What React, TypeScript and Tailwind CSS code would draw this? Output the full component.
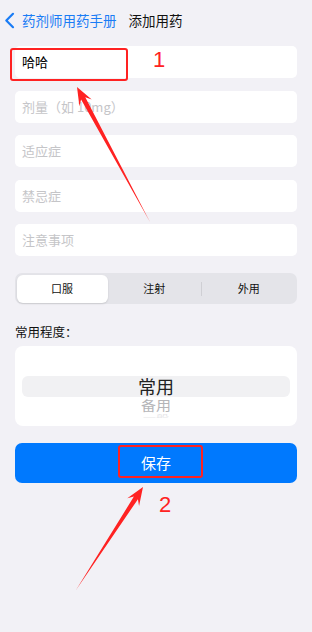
const font = { fontFamily: '"Noto Sans CJK SC", "Noto Sans", sans-serif' };

function arrowPoints(tx: number, ty: number, hx: number, hy: number) {
  const dx = hx - tx;
  const dy = hy - ty;
  const len = Math.hypot(dx, dy);
  const ux = dx / len;
  const uy = dy / len;
  const px = -uy;
  const py = ux;
  const headLen = 18;
  const headW = 7;
  const shaftW = 2.4;
  const bx = hx - ux * headLen;
  const by = hy - uy * headLen;
  const nx = hx - ux * (headLen - 5);
  const ny = hy - uy * (headLen - 5);
  const pts = [
    [tx, ty],
    [nx + px * shaftW, ny + py * shaftW],
    [bx + px * headW, by + py * headW],
    [hx, hy],
    [bx - px * headW, by - py * headW],
    [nx - px * shaftW, ny - py * shaftW],
  ];
  return pts.map((p) => p.join(',')).join(' ');
}

function Field({ value, placeholder }: { value?: string; placeholder: string }) {
  return (
    <div className="h-[32px] bg-white rounded-[5px] flex items-center px-[7px] text-[13px]">
      {value ? (
        <span className="text-black">{value}</span>
      ) : (
        <span className="text-[#c5c5c8]">{placeholder}</span>
      )}
    </div>
  );
}

export default function App() {
  return (
    <div className="relative w-full min-h-screen bg-[#f2f1f6] overflow-hidden" style={font}>
      {/* nav bar */}
      <div className="h-[40px] flex items-center pl-[4px] pt-[1px]">
        <svg width="12" height="17" viewBox="0 0 12 17" fill="none">
          <path d="M9 1.8 L2.3 8.5 L9 15.2" stroke="#1a7cf5" strokeWidth="2.2" strokeLinecap="round" strokeLinejoin="round" />
        </svg>
        <span className="ml-[6px] text-[13.5px] text-[#1a7cf5]">药剂师用药手册</span>
        <span className="ml-[12px] text-[13.5px] text-[#111]">添加用药</span>
      </div>

      <div className="px-[15px] pt-[6px] flex flex-col">
        <div className="flex flex-col gap-[12.5px]">
          <Field value="哈哈" placeholder="名称" />
          <Field placeholder="剂量（如 10mg）" />
          <Field placeholder="适应症" />
          <Field placeholder="禁忌症" />
          <Field placeholder="注意事项" />
        </div>

        {/* segmented control */}
        <div className="mt-[17px] h-[31px] bg-[#e4e4e9] rounded-[7px] p-[1.5px] flex items-stretch text-[11px] text-[#111]">
          <div className="w-[91px] bg-white rounded-[6px] shadow-[0_1px_2px_rgba(0,0,0,0.12)] flex items-center justify-center">口服</div>
          <div className="flex-1 flex items-center justify-center">注射</div>
          <div className="w-px bg-[#cfcfd4] my-[7px]" />
          <div className="flex-1 flex items-center justify-center">外用</div>
        </div>

        <div className="mt-[19px] text-[12.5px] text-[#111] leading-[18px]">常用程度：</div>

        {/* wheel picker */}
        <div className="mt-[5px] h-[80px] bg-white rounded-[8px] relative overflow-hidden flex flex-col items-center pt-[29px]">
          <div className="absolute left-[7px] right-[7px] top-[30px] h-[21px] rounded-[6px] bg-[#f1f1f3]" />
          <div className="relative h-[21px] flex items-center text-[18px] text-[#222] leading-none">常用</div>
          <div className="relative h-[16px] flex items-center text-[15px] text-[#b5b5b8] leading-none scale-y-[0.85]">备用</div>
          <div className="relative h-[8px] overflow-hidden text-[13px] text-[#e6e6e8] leading-none scale-y-[0.5]">一般</div>
        </div>

        <button className="mt-[17px] h-[40px] bg-[#0079fe] rounded-[7px] text-white text-[15px] flex items-center justify-center">
          保存
        </button>
      </div>

      {/* annotations */}
      <div className="absolute left-[10px] top-[48px] w-[118px] h-[33px] border-2 border-[#f22] rounded-[3px] pointer-events-none" />
      <div className="absolute left-[153px] top-[49px] text-[22px] text-[#f22] leading-none pointer-events-none" style={{ fontFamily: '"Liberation Sans", sans-serif' }}>1</div>
      <div className="absolute left-[118px] top-[445px] w-[85px] h-[33px] border-2 border-[#f22] rounded-[3px] pointer-events-none" />
      <div className="absolute left-[159px] top-[494px] text-[22px] text-[#f22] leading-none pointer-events-none" style={{ fontFamily: '"Liberation Sans", sans-serif' }}>2</div>
      <svg className="absolute inset-0 pointer-events-none" width="312" height="632">
        <polygon points={arrowPoints(150, 222, 77, 87)} fill="#f22" />
        <polygon points={arrowPoints(76, 590, 143, 487)} fill="#f22" />
      </svg>
    </div>
  );
}
